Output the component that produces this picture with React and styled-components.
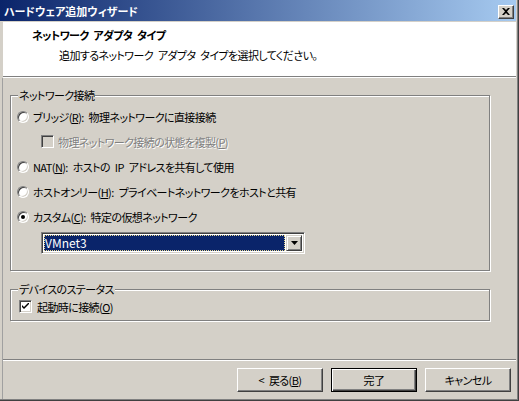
import styled, { createGlobalStyle } from "styled-components";

const Global = createGlobalStyle`
  html, body { margin: 0; padding: 0; background: #d4d0c8; }
  body {
    font-family: "Noto Sans CJK JP", "Liberation Sans", sans-serif;
    font-size: 11px;
    letter-spacing: -0.6px;
    word-spacing: 3px;
    font-feature-settings: "palt";
    color: #000;
  }
`

const Window = styled.div`
  width: 519px;
  height: 401px;
  box-sizing: border-box;
  background: #d4d0c8;
  display: flex;
  flex-direction: column;
  padding: 0 3px 2px 0;
  box-shadow: inset -1px -1px #404040, inset -2px -2px #808080;
`

const TitleBar = styled.div`
  height: 21px;
  box-sizing: border-box;
  display: flex;
  align-items: center;
  padding: 1px 2px 0 4px;
  background: linear-gradient(to right, #0a246a, #a6caf0);
  color: #fff;
  font-weight: bold;
  letter-spacing: 0;
  line-height: 14px;
`

const TitleText = styled.span`
  flex: 1;
`

const CloseBtn = styled.span`
  width: 16px;
  height: 14px;
  box-sizing: border-box;
  display: flex;
  align-items: center;
  justify-content: center;
  background: #d4d0c8;
  border: 1px solid;
  border-color: #fff #404040 #404040 #fff;
  box-shadow: inset -1px -1px #808080;
  margin-top: 1px;
`

const Header = styled.div`
  margin: 1px 0 0 3px;
  height: 55px;
  box-sizing: border-box;
  background: #fff;
  border-bottom: 1px solid #808080;
  box-shadow: 0 1px #fff;
  padding: 6px 0 0 29px;
`

const HeaderTitle = styled.div`
  font-weight: bold;
  line-height: 14px;
`

const HeaderSub = styled.div`
  line-height: 14px;
  margin: 6px 0 0 27px;
`

const Body = styled.div`
  flex: 1;
  margin: 1px 0 0 2px;
  border-left: 1px solid #a0a0a0;
  display: flex;
  flex-direction: column;
  padding-top: 17px;
`

const Group = styled.div`
  margin-left: 7px;
  width: 480px;
  box-sizing: border-box;
  border: 1px solid #808080;
  box-shadow: inset 1px 1px #fff, 1px 1px #fff;
  padding: 0 0 ${p => p.$bottom}px 6px;
  margin-bottom: ${p => p.$gap}px;
`

const GroupTitle = styled.div`
  display: table;
  margin: -8px 0 0 1px;
  padding: 0 1px;
  background: #d4d0c8;
  line-height: 14px;
`

const List = styled.div`
  margin-top: ${p => p.$top}px;
  display: flex;
  flex-direction: column;
`

const Row = styled.div`
  height: 25px;
  display: flex;
  align-items: center;
  gap: ${p => p.$gap || 4}px;
  padding-left: ${p => p.$indent || 0}px;
  color: ${p => (p.$disabled ? "#808080" : "#000")};
  text-shadow: ${p => (p.$disabled ? "1px 1px #fff" : "none")};
  white-space: nowrap;
`

const Radio = styled.span`
  width: 12px;
  height: 12px;
  flex-shrink: 0;
  box-sizing: border-box;
  border-radius: 50%;
  background: #fff;
  border: 1px solid;
  border-color: #808080 #fff #fff #808080;
  box-shadow: inset 1px 1px #404040, inset -1px -1px #d4d0c8;
  &::after {
    content: "";
    display: ${p => (p.$checked ? "block" : "none")};
    width: 4px;
    height: 4px;
    border-radius: 50%;
    background: #000;
    margin: 3px auto 0;
  }
`

const Box = styled.span`
  width: 13px;
  height: 13px;
  flex-shrink: 0;
  box-sizing: border-box;
  background: ${p => (p.$disabled ? "#d4d0c8" : "#fff")};
  border: 1px solid;
  border-color: #808080 #fff #fff #808080;
  box-shadow: inset 1px 1px #404040, inset -1px -1px #d4d0c8;
  display: flex;
  align-items: center;
  justify-content: center;
`

const Select = styled.div`
  margin: 3px 0 0 24px;
  width: 264px;
  height: 22px;
  box-sizing: border-box;
  border: 1px solid;
  border-color: #808080 #fff #fff #808080;
  box-shadow: inset 1px 1px #404040, inset -1px -1px #d4d0c8;
  background: #fff;
  padding: 2px;
  display: flex;
`

const Selected = styled.div`
  flex: 1;
  background: #0a246a;
  color: #fff;
  outline: 1px dotted #e8d890;
  outline-offset: -1px;
  padding-left: 1px;
  line-height: 16px;
  margin-right: 1px;
  font-size: 12px;
  letter-spacing: 0;
`

const DropBtn = styled.div`
  width: 16px;
  box-sizing: border-box;
  background: #d4d0c8;
  border: 1px solid;
  border-color: #d4d0c8 #404040 #404040 #d4d0c8;
  box-shadow: inset 1px 1px #fff, inset -1px -1px #808080;
  display: flex;
  align-items: center;
  justify-content: center;
`

const Footer = styled.div`
  margin-top: auto;
  border-top: 1px solid #808080;
  box-shadow: inset 0 1px #fff;
  padding: 8px 5px 7px 0;
  display: flex;
  justify-content: flex-end;
  gap: 8px;
`

const Button = styled.button`
  width: 86px;
  height: 24px;
  box-sizing: border-box;
  font: inherit;
  letter-spacing: inherit;
  word-spacing: inherit;
  font-feature-settings: "palt";
  color: #000;
  background: #d4d0c8;
  padding: 0;
  border: 1px solid;
  border-color: ${p => (p.$default ? "#000" : "#fff #404040 #404040 #fff")};
  box-shadow: ${p =>
    p.$default
      ? "inset 1px 1px #fff, inset -1px -1px #404040, inset -2px -2px #808080"
      : "inset -1px -1px #808080"};
`

const Check = () => (
  <svg width="7" height="7" viewBox="0 0 7 7">
    <path d="M0 2 L0 4 L2 6 L7 1 L7 -1 L2 4 Z" fill="#000" />
  </svg>
)

const App = () => {
  return (
    <Window>
      <Global />
      <TitleBar>
        <TitleText>ハードウェア追加ウィザード</TitleText>
        <CloseBtn>
          <svg width="8" height="7" viewBox="0 0 8 7">
            <path d="M0 0h2l2 2 2-2h2L5 3.5 8 7H6L4 5 2 7H0l3-3.5z" fill="#000" />
          </svg>
        </CloseBtn>
      </TitleBar>
      <Header>
        <HeaderTitle>ネットワーク アダプタ タイプ</HeaderTitle>
        <HeaderSub>追加するネットワーク アダプタ タイプを選択してください。</HeaderSub>
      </Header>
      <Body>
        <Group $bottom={16} $gap={18}>
          <GroupTitle>ネットワーク接続</GroupTitle>
          <List $top={2}>
            <Row>
              <Radio />
              <span>ブリッジ(<u>R</u>): 物理ネットワークに直接接続</span>
            </Row>
            <Row $indent={24} $disabled>
              <Box $disabled />
              <span>物理ネットワーク接続の状態を複製(<u>P</u>)</span>
            </Row>
            <Row>
              <Radio />
              <span>NAT(<u>N</u>): ホストの IP アドレスを共有して使用</span>
            </Row>
            <Row>
              <Radio />
              <span>ホストオンリー(<u>H</u>): プライベートネットワークをホストと共有</span>
            </Row>
            <Row>
              <Radio $checked />
              <span>カスタム(<u>C</u>): 特定の仮想ネットワーク</span>
            </Row>
          </List>
          <Select>
            <Selected>VMnet3</Selected>
            <DropBtn>
              <svg width="7" height="4" viewBox="0 0 7 4">
                <path d="M0 0h7L3.5 4z" fill="#000" />
              </svg>
            </DropBtn>
          </Select>
        </Group>
        <Group $bottom={1} $gap={0}>
          <GroupTitle>デバイスのステータス</GroupTitle>
          <List $top={-2}>
            <Row $indent={2} $gap={5}>
              <Box>
                <Check />
              </Box>
              <span>起動時に接続(<u>O</u>)</span>
            </Row>
          </List>
        </Group>
        <Footer>
          <Button>&lt; 戻る(<u>B</u>)</Button>
          <Button $default>完了</Button>
          <Button>キャンセル</Button>
        </Footer>
      </Body>
    </Window>
  )
}

export default App;
